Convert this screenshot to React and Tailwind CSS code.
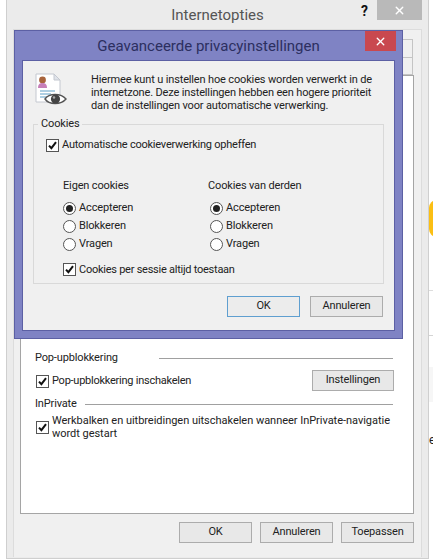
import { X } from 'lucide-react';

function Checkbox() {
  return (
    <span className="flex h-[13px] w-[13px] shrink-0 items-center justify-center border border-[#555] bg-white">
      <svg width="11" height="11" viewBox="0 0 11 11" fill="none">
        <path d="M2 5.6 L4.4 8.2 L9 2.2" stroke="#111" strokeWidth="2" />
      </svg>
    </span>
  );
}

function Radio({ checked }) {
  return (
    <span className="flex h-[13px] w-[13px] shrink-0 items-center justify-center rounded-full border border-[#555] bg-white">
      {checked && <span className="h-[7px] w-[7px] rounded-full bg-[#222]" />}
    </span>
  );
}

function RadioRow({ label, checked }) {
  return (
    <div className="flex h-[18px] items-center gap-[3px]">
      <Radio checked={checked} />
      <span>{label}</span>
    </div>
  );
}

function Button({ label, primary, width = 'w-[73px]' }) {
  return (
    <button
      className={
        primary
          ? `flex h-[21px] ${width} items-center justify-center border border-[#5f9fd0] bg-[#ececec]`
          : `flex h-[21px] ${width} items-center justify-center border border-[#acacac] bg-[#e8e8e8]`
      }
    >
      {label}
    </button>
  );
}

function PrivacyIcon() {
  return (
    <svg width="32" height="34" viewBox="0 0 32 34" fill="none">
      <path d="M1 1 H19 L25 7 V29 H1 Z" fill="#fff" stroke="#c4c8d0" />
      <path d="M19 1 V7 H25 Z" fill="#dfe3ea" stroke="#c4c8d0" />
      <circle cx="7.5" cy="7" r="3.4" fill="#a8643c" />
      <path d="M3 15 C3 11 5 10 7.5 10 C10 10 12 11 12 15 Z" fill="#c77fb8" />
      <path d="M5 18 H20 M5 21 H16 M5 24 H12" stroke="#5f9fc8" strokeWidth="1.2" />
      <path d="M10 26 C14 20 26 20 31 26 C26 32 14 32 10 26 Z" fill="#fff" stroke="#555" strokeWidth="1.4" />
      <circle cx="20.5" cy="26" r="4.6" fill="#444" />
      <circle cx="19" cy="24.5" r="1.2" fill="#aaa" />
    </svg>
  );
}

function PrivacyDialog() {
  return (
    <div className="absolute left-[14px] top-[30px] flex h-[309px] w-[389px] flex-col border border-[#5c60a4] bg-[#7f83c4] px-[7px] pb-[7px]">
      <div className="relative flex h-[29px] shrink-0 items-center justify-center pt-[1px]">
        <span className="text-[15px] tracking-normal text-[#2c2f60]">Geavanceerde privacyinstellingen</span>
        <div className="absolute right-[-1px] top-0 flex h-[20px] w-[31px] items-center justify-center bg-[#c9484f]">
          <X size={13} strokeWidth={2.5} className="text-white" />
        </div>
      </div>

      <div className="flex flex-1 flex-col border border-[#5c60a4] bg-[#f0f0f0] px-[10px]">
        <div className="flex h-[55px] shrink-0 items-start pt-[12px]">
          <div className="ml-[2px] w-[56px] shrink-0">
            <PrivacyIcon />
          </div>
          <p className="whitespace-nowrap leading-[13px]">
            Hiermee kunt u instellen hoe cookies worden verwerkt in de
            <br />
            internetzone. Deze instellingen hebben een hogere prioriteit
            <br />
            dan de instellingen voor automatische verwerking.
          </p>
        </div>

        <fieldset className="h-[168px] border border-[#d9d9d9] px-[12px]">
          <legend className="ml-[-8px] px-[3px] leading-[16px]">Cookies</legend>
          <div className="flex items-center gap-[3px] pt-[5px]">
            <Checkbox />
            <span className="tracking-[-0.23px]">Automatische cookieverwerking opheffen</span>
          </div>
          <div className="mt-[23px] flex pl-[17px]">
            <div className="w-[145px]">
              <p className="mb-[5px] leading-[18px]">Eigen cookies</p>
              <RadioRow label="Accepteren" checked />
              <RadioRow label="Blokkeren" />
              <RadioRow label="Vragen" />
            </div>
            <div>
              <p className="mb-[5px] leading-[18px]">Cookies van derden</p>
              <div className="pl-[2px]">
                <RadioRow label="Accepteren" checked />
                <RadioRow label="Blokkeren" />
                <RadioRow label="Vragen" />
              </div>
            </div>
          </div>
          <div className="ml-[17px] mt-[8px] flex items-center gap-[3px]">
            <Checkbox />
            <span className="tracking-[-0.25px]">Cookies per sessie altijd toestaan</span>
          </div>
        </fieldset>

        <div className="mt-[12px] flex justify-end gap-[10px] pr-px">
          <Button label="OK" primary />
          <Button label="Annuleren" />
        </div>
      </div>
    </div>
  );
}

// sliver of the page behind the dialog, right of the window
function PageEdge() {
  return (
    <div className="flex w-[4px] flex-col overflow-hidden pt-[200px]">
      <div className="h-[37px] w-[8px] shrink-0 rounded-l-full bg-[#fbbf14]" />
      <div className="mt-[53px] h-px shrink-0 bg-[#dddddd]" />
      <div className="mt-[44px] h-px shrink-0 bg-[#d4d4d4]" />
      <div className="mt-[31px] h-[35px] shrink-0 bg-[#f6f6f6]" />
      <div className="mt-[31px] text-[12px] leading-[14px]">e</div>
    </div>
  );
}

export default function App() {
  return (
    <div className="relative flex h-[560px] w-[433px] overflow-hidden bg-white font-['Roboto',sans-serif] text-[11px] tracking-[-0.15px] text-[#222]">
      <div className="ml-[6px] flex h-[559px] w-[423px] shrink-0 flex-col border border-t-0 border-[#cfcfcf] bg-[#ebebeb]">
        <div className="relative flex h-[29px] shrink-0 items-center justify-center pt-[1px]">
          <span className="text-[15px] tracking-normal text-[#555]">Internetopties</span>
          <span className="absolute left-[354px] top-[1px] text-[14px] font-bold text-[#111]">?</span>
          <div className="absolute right-[6px] top-0 flex h-[20px] w-[45px] items-center justify-center bg-[#b9b9b9]">
            <X size={13} strokeWidth={2.5} className="text-white" />
          </div>
        </div>

        <div className="mx-[6px] mb-[5px] flex flex-1 flex-col border border-b-0 border-[#dcdcdc] bg-[#f0f0f0] pb-[14px] pl-[6px] pr-[7px]">
          <div className="flex h-[45px] shrink-0 justify-end">
            <div className="mr-[1px] mt-[9px] h-[36px] w-[40px] border border-[#c4c4c4]">
              <div className="mt-[17px] h-px bg-[#c4c4c4]" />
            </div>
          </div>

          <div className="flex h-[439px] shrink-0 flex-col border border-[#a5a5a5] bg-white px-[14px] pt-[249px]">
            <p className="leading-[16px]">Nooit uw locatie op vragen</p>
            <div className="mt-[8px] flex items-center gap-[41px] pr-[6px]">
              <span className="leading-[18px]">Pop-upblokkering</span>
              <div className="h-px flex-1 bg-[#a0a0a0]" />
            </div>
            <div className="mt-[3px] flex items-start justify-between pr-[5px]">
              <div className="mt-[3px] flex items-center gap-[3px] pl-px">
                <Checkbox />
                <span className="tracking-[-0.25px]">Pop-upblokkering inschakelen</span>
              </div>
              <Button label="Instellingen" width="w-[82px]" />
            </div>
            <div className="mt-[4px] flex items-center gap-[8px] pr-[6px]">
              <span className="leading-[18px]">InPrivate</span>
              <div className="h-px flex-1 bg-[#a0a0a0]" />
            </div>
            <div className="mt-[1px] flex items-center gap-[3px] pl-px">
              <Checkbox />
              <span className="whitespace-nowrap leading-[13px] tracking-[-0.03px]">
                Werkbalken en uitbreidingen uitschakelen wanneer InPrivate-navigatie
                <br />
                wordt gestart
              </span>
            </div>
          </div>

          <div className="mt-[8px] flex justify-end gap-[8px]">
            <Button label="OK" />
            <Button label="Annuleren" />
            <Button label="Toepassen" />
          </div>
        </div>
      </div>

      <PageEdge />
      <PrivacyDialog />
    </div>
  );
}
